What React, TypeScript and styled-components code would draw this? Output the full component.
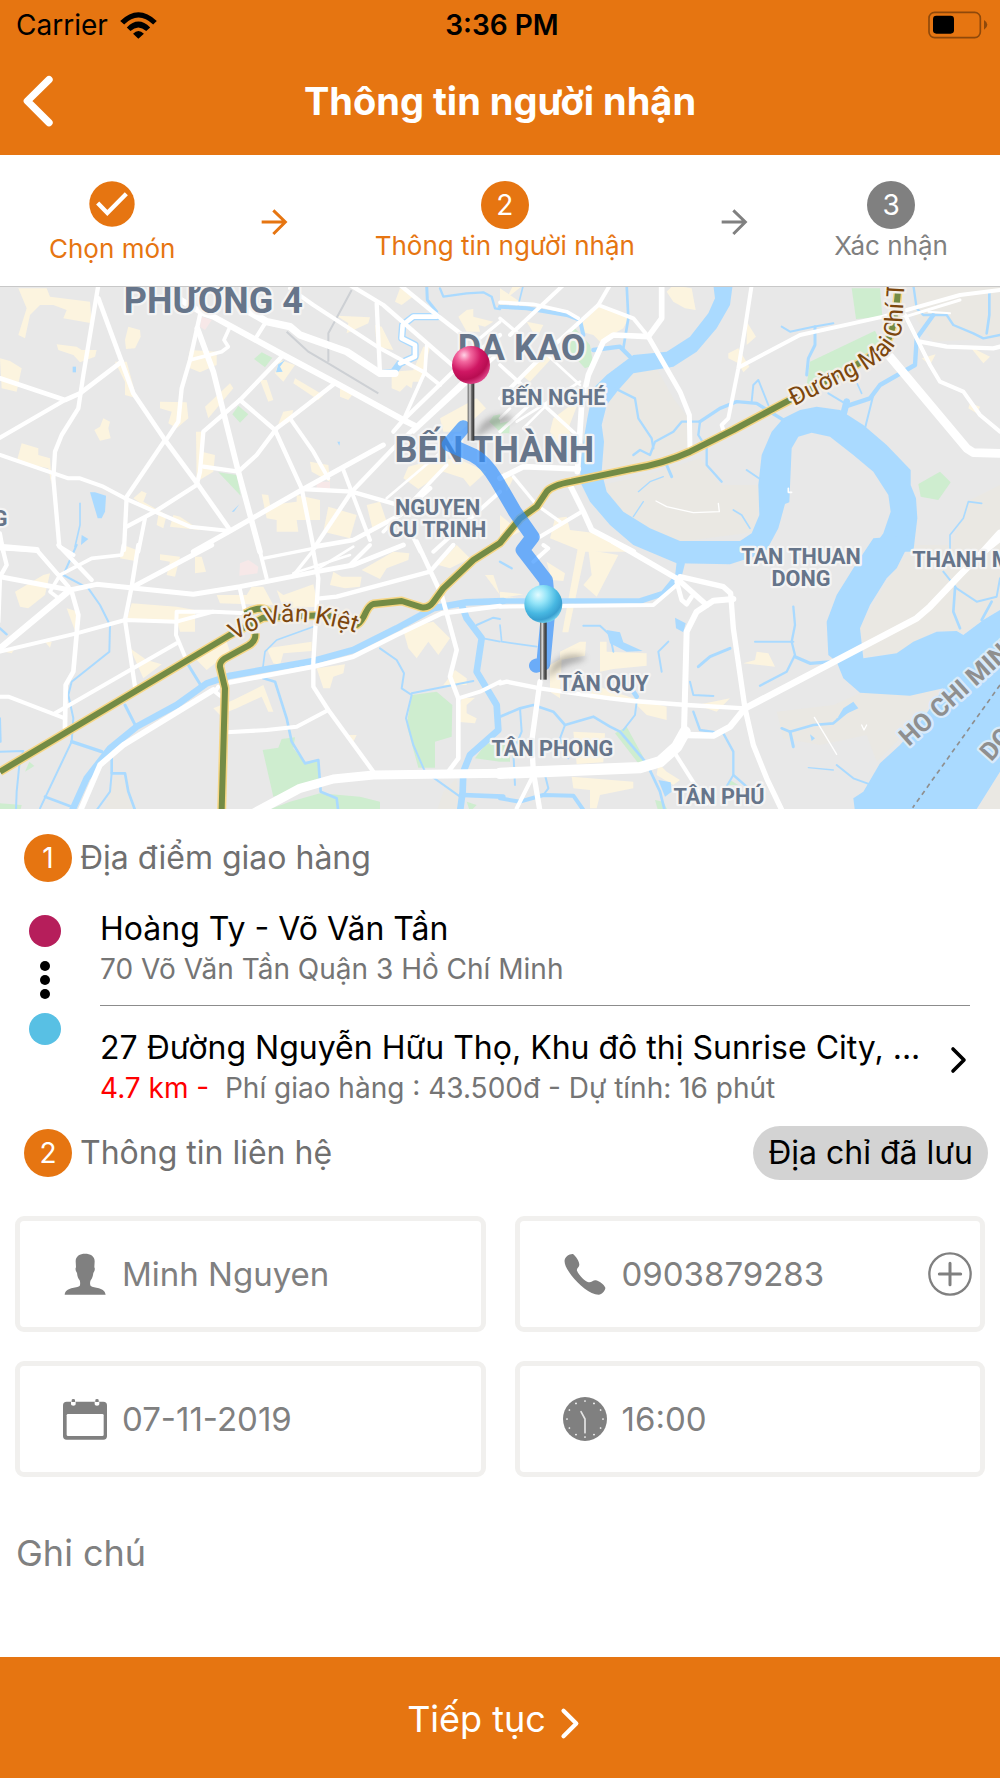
import React from 'react';
import styled, { createGlobalStyle } from 'styled-components';

const ORANGE = '#e67511';
const GRAY = '#808080';

const GlobalStyle = createGlobalStyle`
  *, *::before, *::after { box-sizing: border-box; }
  body { margin: 0; background: #fff; }
  body, button, input, textarea { font-family: Inter, "Noto Sans", sans-serif; }
  button { border: 0; padding: 0; background: none; color: inherit; cursor: pointer; }
  h1, h2, p, ol { margin: 0; padding: 0; font-weight: 400; }
  svg { display: block; flex: none; }
`;

const Screen = styled.div`
  min-height: 100vh;
  display: flex;
  flex-direction: column;
  background: #fff;
`;

const StatusBar = styled.div`
  display: grid;
  grid-template-columns: 1fr auto 1fr;
  align-items: center;
  height: 50px;
  padding: 0 12px 0 16px;
  background: ${ORANGE};
  color: #000;
  font-size: 28px;
`;

const Carrier = styled.div`
  display: flex;
  align-items: center;
  gap: 12px;
`;

const Clock = styled.time`
  font-size: 28px;
  font-weight: 600;
`;

const BatterySlot = styled.div`
  justify-self: end;
`;

const NavBar = styled.header`
  display: grid;
  grid-template-columns: 80px 1fr 80px;
  align-items: center;
  height: 105px;
  padding-bottom: 3px;
  background: ${ORANGE};
  color: #fff;
`;

const BackButton = styled.button`
  padding-left: 22px;
  height: 80px;
`;

const Title = styled.h1`
  text-align: center;
  font-size: 38px;
  font-weight: 700;
  line-height: 48px;
`;

const Steps = styled.ol`
  display: flex;
  justify-content: space-between;
  align-items: center;
  height: 132px;
  padding: 2px 52px 0 49px;
  border-bottom: 1px solid #c8c8c8;
  list-style: none;
`;

const Step = styled.li<{ $active?: boolean }>`
  display: flex;
  flex-direction: column;
  align-items: center;
  color: ${(p) => (p.$active ? ORANGE : GRAY)};
  font-size: 26px;
  line-height: 34px;
`;

const StepMark = styled.div`
  height: 54px;
  padding-top: 3px;
`;

const Badge = styled.span<{ $color?: string }>`
  display: grid;
  place-items: center;
  flex: none;
  width: 48px;
  height: 48px;
  border-radius: 50%;
  background: ${(p) => p.$color ?? ORANGE};
  color: #fff;
  font-size: 28px;
  line-height: 32px;
`;

const MapFrame = styled.figure`
  margin: 0 0 2px;
  height: 522px;
  overflow: hidden;
  background: #e8e8e8;
  svg { width: 100%; height: 100%; }
`;

const SectionHead = styled.div`
  display: flex;
  align-items: center;
  gap: 8px;
  min-height: 54px;
  margin-top: 20px;
  padding: 0 12px 0 24px;
`;

const SectionTitle = styled.h2`
  flex: 1;
  color: #707070;
  font-size: 32px;
  line-height: 44px;
`;

const SavedButton = styled.button`
  height: 54px;
  padding: 0 15px;
  border-radius: 27px;
  background: #d3d3d3;
  color: #000;
  font-size: 32px;
  line-height: 44px;
`;

const Places = styled.div`
  display: grid;
  grid-template-columns: 71px 1fr;
  margin-top: 22px;
  padding: 0 30px 0 29px;
`;

const Rail = styled.div`
  display: flex;
  flex-direction: column;
  gap: 14px;
  width: 32px;
  padding-top: 8px;
`;

const Dot = styled.span<{ $color: string }>`
  width: 32px;
  height: 32px;
  border-radius: 50%;
  background: ${(p) => p.$color};
`;

const PlaceList = styled.div`
  min-width: 0;
`;

const Place = styled.div`
  padding-bottom: 18px;
  border-bottom: 1px solid #8c8c8c;
`;

const PlaceButton = styled.button`
  display: flex;
  align-items: flex-start;
  justify-content: space-between;
  width: 100%;
  padding-top: 20px;
  text-align: left;
`;

const PlaceText = styled.div`
  min-width: 0;
`;

const PlaceName = styled.p`
  overflow: hidden;
  color: #000;
  font-size: 32px;
  line-height: 44px;
  white-space: nowrap;
`;

const PlaceDetail = styled.p`
  color: #757575;
  font-size: 28px;
  line-height: 36px;
  white-space: pre-wrap;
`;

const Distance = styled.span`
  color: #f00;
`;

const ChevronSlot = styled.span`
  padding: 19px 2px 0 0;
`;

const Fields = styled.form`
  display: grid;
  grid-template-columns: 1fr 1fr;
  gap: 29px;
  margin-top: 36px;
  padding: 0 15px;
`;

const Field = styled.label`
  display: flex;
  align-items: center;
  gap: 15px;
  min-width: 0;
  height: 116px;
  padding: 0 8px 0 43px;
  border: 5px solid #f1f0ee;
  border-radius: 9px;
`;

const FieldInput = styled.input`
  flex: 1;
  min-width: 0;
  padding: 0;
  border: 0;
  outline: 0;
  background: none;
  color: ${GRAY};
  font-size: 33px;
  line-height: 44px;
`;

const Note = styled.textarea`
  flex: 1;
  min-height: 100px;
  margin: 0;
  padding: 54px 16px 0;
  border: 0;
  outline: 0;
  resize: none;
  color: ${GRAY};
  font-size: 36px;
  line-height: 44px;
  &::placeholder { color: ${GRAY}; opacity: 1; }
`;

const NextButton = styled.button`
  display: flex;
  align-items: center;
  justify-content: center;
  gap: 14px;
  height: 121px;
  padding: 3px 12px 0 0;
  background: ${ORANGE};
  color: #fff;
  font-size: 36px;
  line-height: 44px;
  svg { margin-top: 8px; }
`;

/* ---------- icons ---------- */

const WifiIcon = () => (
  <svg width="37" height="27" viewBox="360 30 111 82" aria-hidden="true">
    <path d="M360 57Q415 4 471 57L460 68Q415 26 372 68ZM380 77Q415 41 451 77L439 88Q415 66 391 88ZM399 96Q415 79 432 96L415 111Z" />
  </svg>
);

const BatteryIcon = () => (
  <svg width="60" height="28" viewBox="1284 31 180 84" aria-hidden="true">
    <rect x="1287" y="35" width="154" height="76" rx="17" fill="none" stroke="#8f490b" strokeWidth="5" />
    <rect x="1299" y="45" width="63" height="54" rx="10" />
    <path d="M1452 58Q1462 64 1462 72T1452 87Z" fill="#8f490b" />
  </svg>
);

const BackIcon = () => (
  <svg width="32" height="52" viewBox="66 224 96 156" aria-hidden="true">
    <path d="M147 238L82 302L147 367" fill="none" stroke="#fff" strokeWidth="22" strokeLinecap="round" strokeLinejoin="round" />
  </svg>
);

const CheckIcon = () => (
  <svg width="46" height="46" viewBox="268 544 138 138" aria-hidden="true">
    <circle cx="337" cy="613" r="68" fill={ORANGE} />
    <path d="M294 610L323 640L380 582" fill="none" stroke="#fff" strokeWidth="13" />
  </svg>
);

const StepArrow = ({ color }: { color: string }) => (
  <svg width="28" height="28" viewBox="785 625 84 84" aria-hidden="true">
    <path d="M787 667H857M822 632L858 667L822 703" fill="none" stroke={color} strokeWidth="9" />
  </svg>
);

const Ellipsis = () => (
  <svg width="32" height="38" viewBox="0 0 32 38" aria-hidden="true">
    <circle cx="16" cy="5" r="5" />
    <circle cx="16" cy="19" r="5" />
    <circle cx="16" cy="33" r="5" />
  </svg>
);

const ChevronRight = ({ color, width, height }: { color: string; width: number; height: number }) => (
  <svg width={width} height={height} viewBox="0 0 18 30" aria-hidden="true">
    <path d="M3 4L14 15L3 26" fill="none" stroke={color} strokeWidth="3.6" strokeLinecap="round" strokeLinejoin="round" />
  </svg>
);

const PersonIcon = () => (
  <svg width="44" height="44" viewBox="189 154 132 132" fill={GRAY} aria-hidden="true">
    <path d="M255 159C240 159 227 166 227 182L228 200C225 203 227 212 231 217C232 228 235 234 239 239C241 244 241 252 239 256C230 262 196 260 194 282H317C315 260 281 262 272 256C269 250 270 244 272 239C276 234 279 226 280 217C284 212 286 203 283 200L284 182C284 166 271 159 255 159Z" />
  </svg>
);

const PhoneIcon = () => (
  <svg width="44" height="44" viewBox="189 154 132 132" fill={GRAY} aria-hidden="true">
    <path d="M219 160C228 167 238 182 238 193C236 202 229 203 231 210C238 226 254 240 266 245C276 246 280 237 288 239C300 243 312 252 316 261C317 268 306 282 296 282C270 282 235 250 215 225C200 205 192 190 194 178C196 168 208 159 219 160Z" />
  </svg>
);

const CalendarIcon = () => (
  <svg width="44" height="44" viewBox="189 589 132 132" aria-hidden="true">
    <rect x="189" y="603" width="132" height="114" rx="11" fill={GRAY} />
    <rect x="200" y="640" width="111" height="66" rx="4" fill="#fff" />
    <path d="M213 603H227V611Q227 615 220 615T213 611ZM284 603H298V611Q298 615 291 615T284 611Z" fill="#fff" />
    <path d="M215 604V598Q215 595 220 595T225 598V604ZM286 604V598Q286 595 291 595T296 598V604Z" fill={GRAY} />
  </svg>
);

const ClockIcon = () => (
  <svg width="44" height="44" viewBox="189 589 132 132" aria-hidden="true">
    <circle cx="255" cy="655" r="66" fill={GRAY} />
    {Array.from({ length: 12 }, (_, i) => {
      const a = (i * Math.PI) / 6;
      return <circle key={i} cx={255 + 54 * Math.sin(a)} cy={655 - 54 * Math.cos(a)} r="2.6" fill="#fff" />;
    })}
    <path d="M243 633L255 655V696" fill="none" stroke="#e4e4e4" strokeWidth="5" strokeLinecap="round" strokeLinejoin="round" />
  </svg>
);

const PlusIcon = () => (
  <svg width="44" height="44" viewBox="0 0 132 132" fill="none" stroke={GRAY} aria-hidden="true">
    <circle cx="66" cy="66" r="62" strokeWidth="7" />
    <path d="M34 66H98M66 34V98" strokeWidth="9" strokeLinecap="round" />
  </svg>
);

/* ---------- map ---------- */

type Line = [number, string];
interface MapTile {
  x: number;
  y: number;
  sand: string[];
  blocks: string[];
  pink: string[];
  parks: string[];
  ponds: string[];
  streams: Line[];
  roads: Line[];
}

const northWest: MapTile = {
  x: 0,
  y: -6,
  sand: [],
  blocks: [
    '55,10 140,10 150,35 270,50 275,115 190,100 200,75 160,60 120,60 90,90 75,160 55,150 80,70',
    '170,178 230,185 245,195 290,195 285,215 240,232 220,210 175,195',
    '0,220 30,228 65,250 50,320 5,310',
    '385,125 420,135 422,155 405,190 378,192 375,165',
    '345,230 380,230 410,340 375,330 375,290', '570,195 650,200 650,240 600,262 560,245',
    '480,350 560,352 565,400 530,430 505,415 515,380 480,370',
    '310,400 330,410 325,430 332,460 300,467 283,435 300,425',
    '65,475 115,490 115,510 150,520 155,600 145,550 50,530',
    '588,440 605,440 605,500 645,510 640,560 590,590',
    '615,365 690,295 700,310 625,400', '780,285 800,285 820,345 805,350',
    '885,280 970,330 955,345 880,295', '840,225 885,240 850,290 825,265',
    '1010,92 1110,97 1105,115 1040,145 1045,115', '1200,10 1245,30 1205,60 1185,50',
    '1400,75 1420,72 1420,95 1480,110 1455,125 1435,120 1440,140 1400,140 1375,95',
    '1175,260 1245,255 1235,310 1220,300 1200,320 1175,310', '1270,185 1290,185 1265,290 1225,290',
    '1320,400 1430,340 1458,370 1380,440 1330,440',
    '1225,545 1280,530 1370,520 1460,560 1410,605 1390,580 1330,560 1255,612 1210,580',
    '425,618 440,625 430,650 500,690 490,730 470,720 475,690 400,640',
    '520,690 540,695 600,735 510,725', '785,628 805,630 810,660 890,650 890,630 960,645 960,705 890,705 895,740 830,740 830,705 800,700',
    '985,665 1070,690 1050,760 970,740', '1100,660 1140,650 1160,710 1120,740',
    '930,530 985,540 990,590 935,560', '1020,310 1060,325 1045,345 1020,335', '850,380 880,375 870,410 830,430',
    '1125,120 1145,125 1180,195 1130,185',
  ],
  pink: ['605,95 635,105 615,135 600,125', '950,590 990,590 990,612 950,610'],
  parks: ['785,202 817,218 795,247 762,222', '715,362 745,388 720,413 697,388', '655,562 710,570 722,632', '1480,392 1500,388 1500,440 1468,410'],
  ponds: [
    '270,622 285,622 318,632 315,680 305,700 293,700', '218,245 228,245 228,262 218,262',
    '835,238 855,225 840,245 848,260 828,262', '1012,470 1020,470 1018,482', '245,750 265,762 243,780',
    '695,680 718,658 702,680',
  ],
  streams: [
    [9, '1280,0 1282,45 1310,80'],
    [22, '1310,95 1240,95 1208,120 1205,160 1245,180 1245,215 1200,235 1180,262 1150,265'],
    [7, '1320,10 1330,35 1400,25 1450,22 1475,35 1485,70 1500,72'],
    [5, '240,655 240,720 225,785'],
  ],
  roads: [
    [13, '295,0 250,270 235,370 185,450 165,500 160,580 178,785 220,810'],
    [14, '295,40 365,230 400,325 495,465 595,600 690,735'],
    [14, '0,280 195,345 240,325 365,230'], [13, '195,345 0,458'],
    [12, '0,510 205,580 240,580 310,605 375,640 465,680 570,725 690,738'],
    [13, '495,465 380,635 372,795'], [13, '600,90 570,225 545,310 535,410 495,470'],
    [17, '592,130 640,260 715,560 780,800'],
    [13, '850,210 720,345 610,440 600,560 590,600 465,680 380,725'],
    [13, '610,545 715,560 770,510 830,430 870,400 1005,295'],
    [13, '720,345 825,435 905,610 940,785'], [12, '870,400 940,500 985,580'],
    [18, '500,20 610,85 640,95 850,210 1000,290 1210,405 1250,425'],
    [11, '690,125 672,165 685,185 665,200 570,225'], [12, '795,115 770,155'],
    [22, '740,75 800,110 870,125 900,150 1040,200 1140,265 1185,265'],
    [15, '580,800 690,738 905,615 1150,480'], [13, '905,612 1055,620 1230,670'],
    [12, '1030,555 1110,765'], [13, '945,785 1055,620 1180,490 1390,290'], [13, '1180,440 1210,405 1380,240 1500,150'],
    [12, '1240,440 1500,200'], [12, '870,10 940,60 1140,190 1270,260 1320,300'],
    [13, '1050,0 1150,60 1310,200 1380,260'], [13, '1130,55 1140,265'], [13, '1200,0 1310,90 1400,160'],
    [11, '1280,180 1275,260 1210,405'], [11, '1150,740 1340,540'], [14, '945,785 1060,765 1200,690 1290,610'],
    [12, '435,700 415,800'], [10, '1440,160 1500,110'], [12, '1300,800 1500,620'], [10, '1240,760 1260,800'],
    [18, '0,785 110,795'], [8, '1160,640 1360,470'], [12, '0,745 10,800'],
    [14, '1310,95 1240,95 1208,120 1205,160 1245,180 1245,215 1200,235'],
  ],
};

const northEast: MapTile = {
  x: 1500,
  y: -6,
  sand: [
    '340,310 400,260 470,250 520,340 565,400 560,490 400,540 310,560 310,420',
    '310,600 470,560 600,520 660,600 780,600 770,740 540,770 380,700',
    '1240,0 1500,0 1500,160 1300,170 1240,90', '1350,800 1400,650 1500,600 1500,800',
  ],
  blocks: [
    '500,20 520,0 575,10 587,75 555,70 520,50', '245,115 295,65 390,90 370,130 300,170 280,150 245,140',
    '65,270 130,200 155,220 90,290', '160,400 240,340 205,430 225,480 190,500 150,440',
    '740,110 768,155 740,180', '685,205 715,190 748,245 730,262 715,235 685,220',
    '1265,220 1307,208 1290,240', '1410,185 1470,215 1450,235', '0,10 60,50 0,60', '80,110 130,120 110,160',
    '165,700 200,695 210,735 290,745 390,800 250,800 150,760', '0,690 60,740 0,770', '1410,355 1440,365 1430,385 1405,370',
    '10,560 40,580 20,620', '40,0 70,0 20,40',
  ],
  pink: [],
  parks: [
    '1055,10 1140,10 1147,95 1068,102', '930,230 1125,137 1150,190 1060,240 920,300',
    '1320,560 1352,592 1315,645 1262,635 1255,597', '185,165 225,130 270,180 280,240 255,250 200,190',
    '0,415 30,408 28,445 0,445',
  ],
  ponds: [
    '640,0 645,40 625,85 570,155 500,200 400,210 360,240 320,270 280,310 262,400 245,500 240,590 270,650 330,720 400,780 530,835 690,838 760,815 800,795 835,730 855,657 868,652 875,490 895,455 935,443 990,455 1060,510 1120,560 1165,630 1172,680 1150,745 1110,800 1240,800 1252,700 1248,640 1232,600 1232,555 1160,480 1090,420 1020,375 950,365 900,375 850,400 815,440 785,510 775,600 778,690 755,745 720,768 540,768 450,730 370,680 320,620 305,560 312,470 305,420 320,360 355,315 400,265 520,245 590,200 650,130 690,60 698,0',
  ],
  streams: [
    [7, '345,310 405,340 415,400 455,460 460,490'],
    [7, '400,510 420,495 450,510 465,470 520,440 545,410 600,410'],
    [10, '600,410 660,370 710,350 770,355 850,405'],
    [7, '600,410 595,450 620,490 620,540 665,590'], [6, '755,350 760,300 775,285 805,360'],
    [6, '845,125 870,140 940,125 1000,115'], [9, '945,125 945,180 925,220 920,270'],
    [7, '1240,0 1250,70 1270,90 1340,90 1360,120 1420,145 1450,160 1500,150'], [8, '1468,25 1468,90 1460,145'],
    [13, '1300,90 1250,160 1245,240 1140,300 1110,340 1035,365'], [20, '1040,350 1030,390'],
    [6, '1120,330 1095,430'], [6, '985,325 1035,355'], [5, '1060,270 1085,325'], [4, '415,620 450,590 490,575'],
    [4, '400,695 430,650'], [5, '700,675 725,690 750,730'], [5, '1445,655 1405,650 1390,700 1350,750 1350,800'],
    [13, '280,195 360,185 390,215'], [8, '380,0 385,100 370,190'], [9, '500,540 515,575'], [6, '740,555 780,582'],
    [12, '0,65 80,70 200,90 240,105 250,150'], [5, '70,0 55,60'],
  ],
  roads: [
    [11, '0,52 100,58 200,80 235,100'],
    [17, '485,0 485,100 445,155 340,150 310,170 265,270 245,360 232,560'],
    [15, '445,155 540,320 568,390 570,490'], [12, '330,0 295,60 400,100 445,155'], [12, '295,60 130,210 0,340'],
    [12, '755,0 735,130 715,250 685,400 665,420 670,435'], [12, '720,245 900,150 1150,95 1380,30 1500,15'],
    [9, '1200,100 1380,45'], [12, '1215,90 1290,240 1320,290 1390,320 1440,390 1500,440'],
    [13, '1260,170 1340,185 1480,190 1500,185'], [26, '1170,215 1400,490 1420,503 1500,505'],
    [11, '0,240 120,350 230,450'], [8, '50,410 240,290'], [8, '70,430 190,310'], [10, '0,440 110,340'],
    [12, '30,150 190,0'], [10, '0,100 60,150'], [17, '0,580 70,545 235,552'], [10, '40,575 110,660 180,710'],
    [17, '210,600 250,680 275,735 400,800'], [12, '245,680 120,755'], [8, '120,190 240,300'],
    [22, '1450,800 1500,745'], [4, '468,648 500,665 580,683 658,680 655,655'], [5, '865,610 865,622 875,622'],
    [6, '1285,80 1350,85'], [8, '0,400 30,370'],
  ],
};

const southWest: MapTile = {
  x: 0,
  y: 774,
  sand: ['330,740 345,690 385,700 400,800 310,800', '1330,740 1370,700 1380,800 1310,800'],
  blocks: [
    '45,140 130,90 150,85 135,150 85,190 60,185', '395,175 530,185 585,195 585,260 540,260 530,225 380,225',
    '480,28 540,35 525,95 500,90 510,50 480,45', '585,35 605,35 618,80 585,85',
    '650,150 740,150 755,125 790,125 820,180 660,175', '830,135 850,150 940,118 955,185 850,190',
    '1000,80 1025,95 1085,95 1080,125 1035,130 990,120', '1085,75 1180,20 1228,25 1225,45 1160,70 1140,102',
    '1315,60 1370,0 1410,40 1350,70', '1208,250 1300,230 1350,280 1315,330 1285,290 1250,340 1225,310',
    '950,370 1035,358 1030,385 1000,395 990,430 970,430', '800,310 935,290 935,318 850,325 840,360 820,355',
    '390,310 440,345 485,358 430,400', '590,345 680,290 690,320 620,375', '640,490 700,465 790,420 820,500 805,500 785,455 710,490 660,510',
    '1385,460 1425,458 1400,480 1400,505 1430,520 1425,535 1370,530', '200,190 235,200 230,270', '1455,90 1480,90 1500,150',
    '1365,375 1400,400 1400,420 1330,420', '370,0 410,15 405,48 360,40', '1045,570 1070,570 1060,590',
    '0,318 45,310 35,325', '135,290 155,290 150,308',
  ],
  pink: ['720,55 745,45 775,65 772,85 718,92'],
  parks: [
    '788,615 835,608 845,582 885,577 880,610 915,655 955,645 962,720 820,755',
    '1235,450 1310,440 1357,480 1355,575 1305,590 1305,668 1255,668 1220,540',
    '870,770 960,745 1080,755 1140,770 1140,800 790,800', '75,680 88,650 103,663', '1455,600 1500,580 1500,650 1425,640',
    '0,775 65,780 60,800 0,800', '1400,770 1430,780 1410,800',
  ],
  ponds: [],
  streams: [
    [20, '215,800 260,700 330,610 410,545 530,480 620,415 690,392 940,348 1060,315 1190,250 1300,190 1400,172 1510,168'],
    [6, '230,0 190,90 265,130 300,180 330,240 328,320 215,410 205,450 220,520 215,590 120,790'],
    [10, '215,590 305,620'], [9, '375,480 408,545'], [9, '565,360 605,425'], [8, '335,630 335,685 375,685 385,740 405,795'],
    [6, '335,685 330,740 290,795'], [6, '0,620 70,618 58,660 50,740 48,795'], [8, '135,755 215,785'],
    [5, '940,245 830,285 795,320 787,380'], [8, '790,400 825,410 860,520 875,590 915,655 955,645 962,740 1010,760 1015,800'],
    [6, '1140,310 1190,345 1212,385 1205,430 1235,450 1218,520 1240,600 1275,680 1380,755'], [6, '1235,445 1420,408'],
    [20, '1385,180 1400,220 1445,280 1430,380 1490,480 1495,555 1410,630 1390,680 1388,740 1380,800'],
    [14, '1390,750 1510,755'], [6, '1430,240 1480,218 1500,222'], [5, '1450,280 1500,290'], [7, '0,250 20,268'],
    [6, '0,520 2,590'],
  ],
  roads: [
    [13, '0,10 110,15 205,125'], [13, '175,0 275,105'], [13, '0,-20 20,60 0,95 -5,230'],
    [15, '0,95 210,135 290,118 580,148 720,125 950,80 1060,60 1210,0'], [15, '635,0 400,125'],
    [13, '415,0 395,125 375,225 405,425'], [11, '370,0 365,30 275,40 180,90 150,140 170,155'],
    [19, '210,135 0,310'], [12, '0,320 230,265 375,225 530,230 640,200 740,205'],
    [14, '215,140 235,210 220,380 197,420 195,550'], [12, '0,455 25,455 195,520'], [12, '165,505 530,295'],
    [12, '640,200 530,200 528,270 555,335'], [12, '775,0 800,100'], [12, '718,125 735,200'], [10, '790,40 940,10'],
    [10, '945,10 885,85'], [13, '940,20 955,100 940,350 940,425 985,495 1120,680'], [8, '955,70 1060,5'],
    [12, '680,562 800,555 890,545 985,495'], [12, '655,425 645,440 660,452'], [13, '960,160 1010,155 1290,80 1360,0'],
    [14, '1250,-10 1325,150 1370,315 1350,395 1375,460 1375,640 1345,680'], [12, '1375,460 1440,440 1500,410'],
    [17, '240,800 300,660 370,600 640,435'], [14, '690,412 940,365 1060,335 1190,270 1325,205 1500,183'],
    [27, '760,805 900,730 1000,702 1120,690 1510,685'], [12, '1050,60 1110,0'], [8, '880,85 1050,30'],
  ],
};

const southEast: MapTile = {
  x: 1500,
  y: 774,
  sand: [
    '1240,0 1500,0 1500,190 1390,265 1310,255 1190,325 1095,335 1080,250 1160,110',
    '1080,445 1330,435 1190,590 1130,650 1100,570 960,600 850,580 830,500 1000,480', '1430,800 1500,680 1500,800',
  ],
  blocks: [
    '0,140 70,148 0,160', '140,50 195,85 190,108 155,105', '235,0 260,0 205,262 187,262', '265,15 355,30 290,155 250,120 275,90',
    '240,290 258,290 255,332 180,345 180,320', '300,290 320,290 320,320 440,325 440,362 340,372 300,380',
    '150,360 185,340 180,460 150,440', '265,400 310,430 400,460 500,485 500,525 440,510 400,470 270,460', '220,560 315,565 310,652 230,657',
    '215,695 400,710 400,730 300,750 290,790 270,790 270,735 220,730', '730,355 765,345 770,320 805,325 825,365', '590,480 690,460 650,500',
    '475,655 500,680 540,705 520,720 470,690', '0,155 60,160 0,165',
  ],
  pink: [],
  parks: ['345,565 380,545 440,655 415,655', '465,765 490,770 505,800 475,800', '690,705 715,720 680,720', '0,600 30,600 30,650 0,650'],
  ponds: [
    '1240,-30 1190,70 1160,100 1110,180 1080,250 1090,340 1190,325 1240,290 1310,260 1370,258 1390,270 1450,225 1500,195 1500,680 1425,800 1065,800 1060,760 1090,740 1140,655 1200,600 1270,520 1330,430 1230,452 1080,443 1030,400 1010,350 985,330 980,230 1010,150 1060,70 1120,-20',
    '525,218 557,235 550,262 528,250', '320,255 360,262 370,292 428,318 380,320 330,295', '475,705 512,712 515,740 495,755',
    '930,568 945,580 935,588', '530,50 555,55 545,95 525,95', '1060,470 1075,490 1010,520 1000,540 1030,490',
  ],
  streams: [
    [17, '0,168 420,168 490,145 535,90'], [6, '250,242 300,242 330,270 340,320'], [6, '505,290 475,320 485,380'],
    [9, '595,365 630,335 690,310'], [7, '880,185 885,240 875,290 885,330 860,380 780,422'], [6, '765,290 880,290'],
    [10, '885,335 930,355 1000,350'], [5, '0,240 5,290 110,305'], [8, '0,515 60,490 100,480 160,500 195,540 280,515 330,545 360,560 440,655 480,740 495,800'],
    [6, '370,555 405,510 410,470'], [6, '60,490 65,560 40,620 45,720'], [6, '195,540 180,580 205,640'],
    [6, '570,410 580,450 640,453'], [7, '580,500 600,555 670,565 700,620 700,690 740,725'], [6, '700,690 670,740'],
    [8, '845,550 870,560 940,540 1000,535 1060,485'], [9, '870,560 880,605'], [4, '925,668 1000,675'], [6, '1010,660 1060,700 1110,718'],
    [12, '0,760 60,770 130,750 220,752 250,795'], [6, '1330,80 1370,130 1430,170 1490,155 1500,100'], [8, '1365,130 1360,200 1380,250'],
    [8, '1475,170 1445,225'], [7, '0,50 35,70'], [6, '135,690 145,730 130,750'], [14, '400,440 410,455'],
  ],
  roads: [
    [17, '340,-10 530,100 620,180'], [16, '540,95 670,125 692,145 700,250 735,490 760,600 800,700 850,805'],
    [14, '530,110 545,165 560,178 575,155'], [18, '700,162 640,167 590,200 560,260 552,560'],
    [12, '0,185 460,180 530,120'], [13, '0,415 20,410 120,430 330,460 400,468 560,480 735,490'],
    [20, '735,490 1250,220 1290,185 1380,90 1450,20 1500,-20'], [19, '735,490 690,545 640,572 560,570'],
    [34, '0,685 420,668 480,650 530,605 555,560'], [16, '120,410 95,590 100,680 120,800'],
    [12, '525,625 620,775'], [12, '95,700 50,790'], [12, '130,0 145,10 100,50'], [4, '943,517 1010,628'],
    [4, '1085,540 1092,555 1100,540'],
  ],
};

const tiles = [northWest, northEast, southWest, southEast];

const Polygons = ({ layer, fill }: { layer: 'sand' | 'blocks' | 'pink' | 'parks' | 'ponds'; fill: string }) => (
  <g fill={fill}>
    {tiles.map((t) => (
      <g key={`${t.x}${t.y}`} transform={`translate(${t.x} ${t.y})`}>
        {t[layer].map((points) => <polygon key={points} points={points} />)}
      </g>
    ))}
  </g>
);

const Lines = ({ layer, stroke }: { layer: 'streams' | 'roads'; stroke: string }) => (
  <g fill="none" stroke={stroke} strokeLinejoin="round" strokeLinecap="round">
    {tiles.map((t) => (
      <g key={`${t.x}${t.y}`} transform={`translate(${t.x} ${t.y})`}>
        {t[layer].map(([width, points]) => <polyline key={points} points={points} strokeWidth={width} />)}
      </g>
    ))}
  </g>
);

const HIGHWAY = 'M0 1454L690 1044L790 992L980 984L1070 1014Q1085 1005 1098 975Q1108 955 1120 951L1205 942L1265 961Q1285 965 1300 945L1330 904L1420 819L1500 768L1560 695L1610 659L1640 614Q1655 595 1715 584L1900 545Q1990 530 2070 494L2200 429L2360 344L2560 239L2650 184Q2685 140 2695 0';
const BRANCH = 'M665 1570L675 1204L660 1140Q658 1125 675 1114L745 1076Q768 1062 766 1040M735 980Q790 950 810 980';

const MapLabel = styled.text<{ $size: number }>`
  font-family: Roboto, sans-serif;
  font-size: ${(p) => p.$size}px;
  font-weight: 700;
  fill: #66758a;
  stroke: #f4f4f4;
  stroke-width: 14px;
  stroke-linejoin: round;
  paint-order: stroke;
  text-anchor: middle;
`;

const RoadLabel = styled.text`
  font-family: Roboto, sans-serif;
  font-size: 74px;
  font-weight: 400;
  fill: #7c460d;
  stroke: #f3efe8;
  stroke-width: 14px;
  stroke-linejoin: round;
  paint-order: stroke;
`;

const RegionLabel = styled(MapLabel)`
  fill: #8f8f8f;
  stroke: #d8eafa;
  text-anchor: start;
`;

const Pin = ({ x, y, ball }: { x: number; y: number; ball: string }) => (
  <g transform={`translate(${x} ${y})`}>
    <path d="M10 225Q30 150 90 152T110 172Q60 180 10 225Z" fill="#555" opacity="0.4" filter="url(#soft)" />
    <rect x="-10" y="50" width="20" height="177" fill="url(#needle)" />
    <circle r="57" fill={`url(#${ball})`} />
  </g>
);

const DeliveryMap = () => (
  <svg viewBox="0 0 3000 1566" preserveAspectRatio="xMidYMid slice" role="img" aria-label="Bản đồ giao hàng">
    <defs>
      <radialGradient id="pink-ball" cx="0.32" cy="0.24" r="0.8">
        <stop offset="0" stopColor="#ffd3e6" />
        <stop offset="0.22" stopColor="#f3689f" />
        <stop offset="0.55" stopColor="#cf1763" />
        <stop offset="0.8" stopColor="#b80d52" />
        <stop offset="1" stopColor="#e0458a" />
      </radialGradient>
      <radialGradient id="blue-ball" cx="0.36" cy="0.26" r="0.8">
        <stop offset="0" stopColor="#e2fbff" />
        <stop offset="0.3" stopColor="#93e4f8" />
        <stop offset="0.62" stopColor="#48b8e2" />
        <stop offset="0.82" stopColor="#389fd0" />
        <stop offset="1" stopColor="#7fdcf5" />
      </radialGradient>
      <linearGradient id="needle">
        <stop offset="0" stopColor="#5a5a5a" />
        <stop offset="0.35" stopColor="#e0e0e0" />
        <stop offset="0.6" stopColor="#666" />
        <stop offset="1" stopColor="#2e2e2e" />
      </linearGradient>
      <filter id="soft" x="-50%" y="-50%" width="200%" height="200%">
        <feGaussianBlur stdDeviation="9" />
      </filter>
      <path id="vo-van-kiet" d="M704 1062Q800 1000 890 1004T1070 1038" />
      <path id="mai-chi-tho" d="M2382 358L2600 248Q2690 200 2706 120L2724 -200" />
    </defs>
    <rect width="3000" height="1566" fill="#e8e8e8" />
    <Polygons layer="sand" fill="#eae8e3" />
    <Polygons layer="blocks" fill="#fcf4df" />
    <Polygons layer="pink" fill="#f7e8e8" />
    <Polygons layer="parks" fill="#ceedcf" />
    <Polygons layer="ponds" fill="#aadaff" />
    <Lines layer="streams" stroke="#aadaff" />
    <path d="M1055 9L985 139V224M860 134L925 194L985 229L1135 319" fill="none" stroke="#cdd0d4" strokeWidth="6" />
    <Lines layer="roads" stroke="#fff" />
    <path d="M3000 1194L2738 1562" fill="none" stroke="#8f8f8f" strokeWidth="5" strokeDasharray="14 12" />
    <g fill="none" strokeLinejoin="round">
      <path d={`${HIGHWAY}${BRANCH}`} stroke="#f6d684" strokeWidth="27" />
      <path d={`${HIGHWAY}${BRANCH}`} stroke="#738b45" strokeWidth="18" />
    </g>

    <MapLabel $size={108} x="640" y="79">PHƯỜNG 4</MapLabel>
    <MapLabel $size={108} x="1565" y="219">DA KAO</MapLabel>
    <MapLabel $size={108} x="1483" y="524">BẾN THÀNH</MapLabel>
    <MapLabel $size={65} x="1660" y="354">BẾN NGHÉ</MapLabel>
    <MapLabel $size={65} x="1313" y="684">NGUYEN</MapLabel>
    <MapLabel $size={65} x="1313" y="749">CU TRINH</MapLabel>
    <MapLabel $size={65} x="0" y="717">G</MapLabel>
    <MapLabel $size={65} x="2403" y="832">TAN THUAN</MapLabel>
    <MapLabel $size={65} x="2403" y="897">DONG</MapLabel>
    <MapLabel $size={65} x="2904" y="839">THANH MY</MapLabel>
    <MapLabel $size={65} x="1811" y="1211">TÂN QUY</MapLabel>
    <MapLabel $size={65} x="1657" y="1406">TÂN PHONG</MapLabel>
    <MapLabel $size={65} x="2157" y="1552">TÂN PHÚ</MapLabel>
    <RegionLabel $size={76} transform="translate(2726 1380) rotate(-42)">HO CHI MINH</RegionLabel>
    <RegionLabel $size={76} transform="translate(2974 1426) rotate(-48)">DO</RegionLabel>
    <RoadLabel><textPath href="#vo-van-kiet">Võ Văn Kiệt</textPath></RoadLabel>
    <RoadLabel><textPath href="#mai-chi-tho">Đường Mai Chí Thọ</textPath></RoadLabel>

    <path
      d="M1390 421L1346 472L1420 505Q1455 522 1490 580L1545 674L1598 750L1568 789L1638 880L1646 960L1630 1130L1608 1136"
      fill="none" stroke="#2f8fff" strokeOpacity="0.68" strokeWidth="42" strokeLinecap="round" strokeLinejoin="round"
    />
    <Pin x={1413} y={234} ball="pink-ball" />
    <Pin x={1630} y={951} ball="blue-ball" />
  </svg>
);

export default function App() {
  return (
    <Screen>
      <GlobalStyle />
      <StatusBar>
        <Carrier>Carrier<WifiIcon /></Carrier>
        <Clock>3:36 PM</Clock>
        <BatterySlot><BatteryIcon /></BatterySlot>
      </StatusBar>
      <NavBar>
        <BackButton type="button" aria-label="Quay lại"><BackIcon /></BackButton>
        <Title>Thông tin người nhận</Title>
      </NavBar>
      <Steps>
        <Step $active>
          <StepMark><CheckIcon /></StepMark>
          Chọn món
        </Step>
        <li><StepArrow color={ORANGE} /></li>
        <Step $active aria-current="step">
          <Badge>2</Badge>
          Thông tin người nhận
        </Step>
        <li><StepArrow color={GRAY} /></li>
        <Step>
          <Badge $color={GRAY}>3</Badge>
          Xác nhận
        </Step>
      </Steps>
      <MapFrame><DeliveryMap /></MapFrame>

      <SectionHead>
        <Badge>1</Badge>
        <SectionTitle>Địa điểm giao hàng</SectionTitle>
      </SectionHead>
      <Places>
        <Rail>
          <Dot $color="#b61e5b" />
          <Ellipsis />
          <Dot $color="#58c0e4" />
        </Rail>
        <PlaceList>
          <Place>
            <PlaceName>Hoàng Ty - Võ Văn Tần</PlaceName>
            <PlaceDetail>70 Võ Văn Tần Quận 3 Hồ Chí Minh</PlaceDetail>
          </Place>
          <PlaceButton type="button">
            <PlaceText>
              <PlaceName>27 Đường Nguyễn Hữu Thọ, Khu đô thị Sunrise City, ...</PlaceName>
              <PlaceDetail>
                <Distance>4.7 km - </Distance> Phí giao hàng : 43.500đ - Dự tính: 16 phút
              </PlaceDetail>
            </PlaceText>
            <ChevronSlot><ChevronRight color="#000" width={18} height={30} /></ChevronSlot>
          </PlaceButton>
        </PlaceList>
      </Places>

      <SectionHead>
        <Badge>2</Badge>
        <SectionTitle>Thông tin liên hệ</SectionTitle>
        <SavedButton type="button">Địa chỉ đã lưu</SavedButton>
      </SectionHead>
      <Fields>
        <Field>
          <PersonIcon />
          <FieldInput aria-label="Họ tên" defaultValue="Minh Nguyen" />
        </Field>
        <Field>
          <PhoneIcon />
          <FieldInput aria-label="Số điện thoại" type="tel" defaultValue="0903879283" />
          <button type="button" aria-label="Thêm số điện thoại"><PlusIcon /></button>
        </Field>
        <Field>
          <CalendarIcon />
          <FieldInput aria-label="Ngày giao" defaultValue="07-11-2019" />
        </Field>
        <Field>
          <ClockIcon />
          <FieldInput aria-label="Giờ giao" defaultValue="16:00" />
        </Field>
      </Fields>
      <Note aria-label="Ghi chú" placeholder="Ghi chú" />
      <NextButton type="button">
        Tiếp tục
        <ChevronRight color="#fff" width={21} height={35} />
      </NextButton>
    </Screen>
  );
}
